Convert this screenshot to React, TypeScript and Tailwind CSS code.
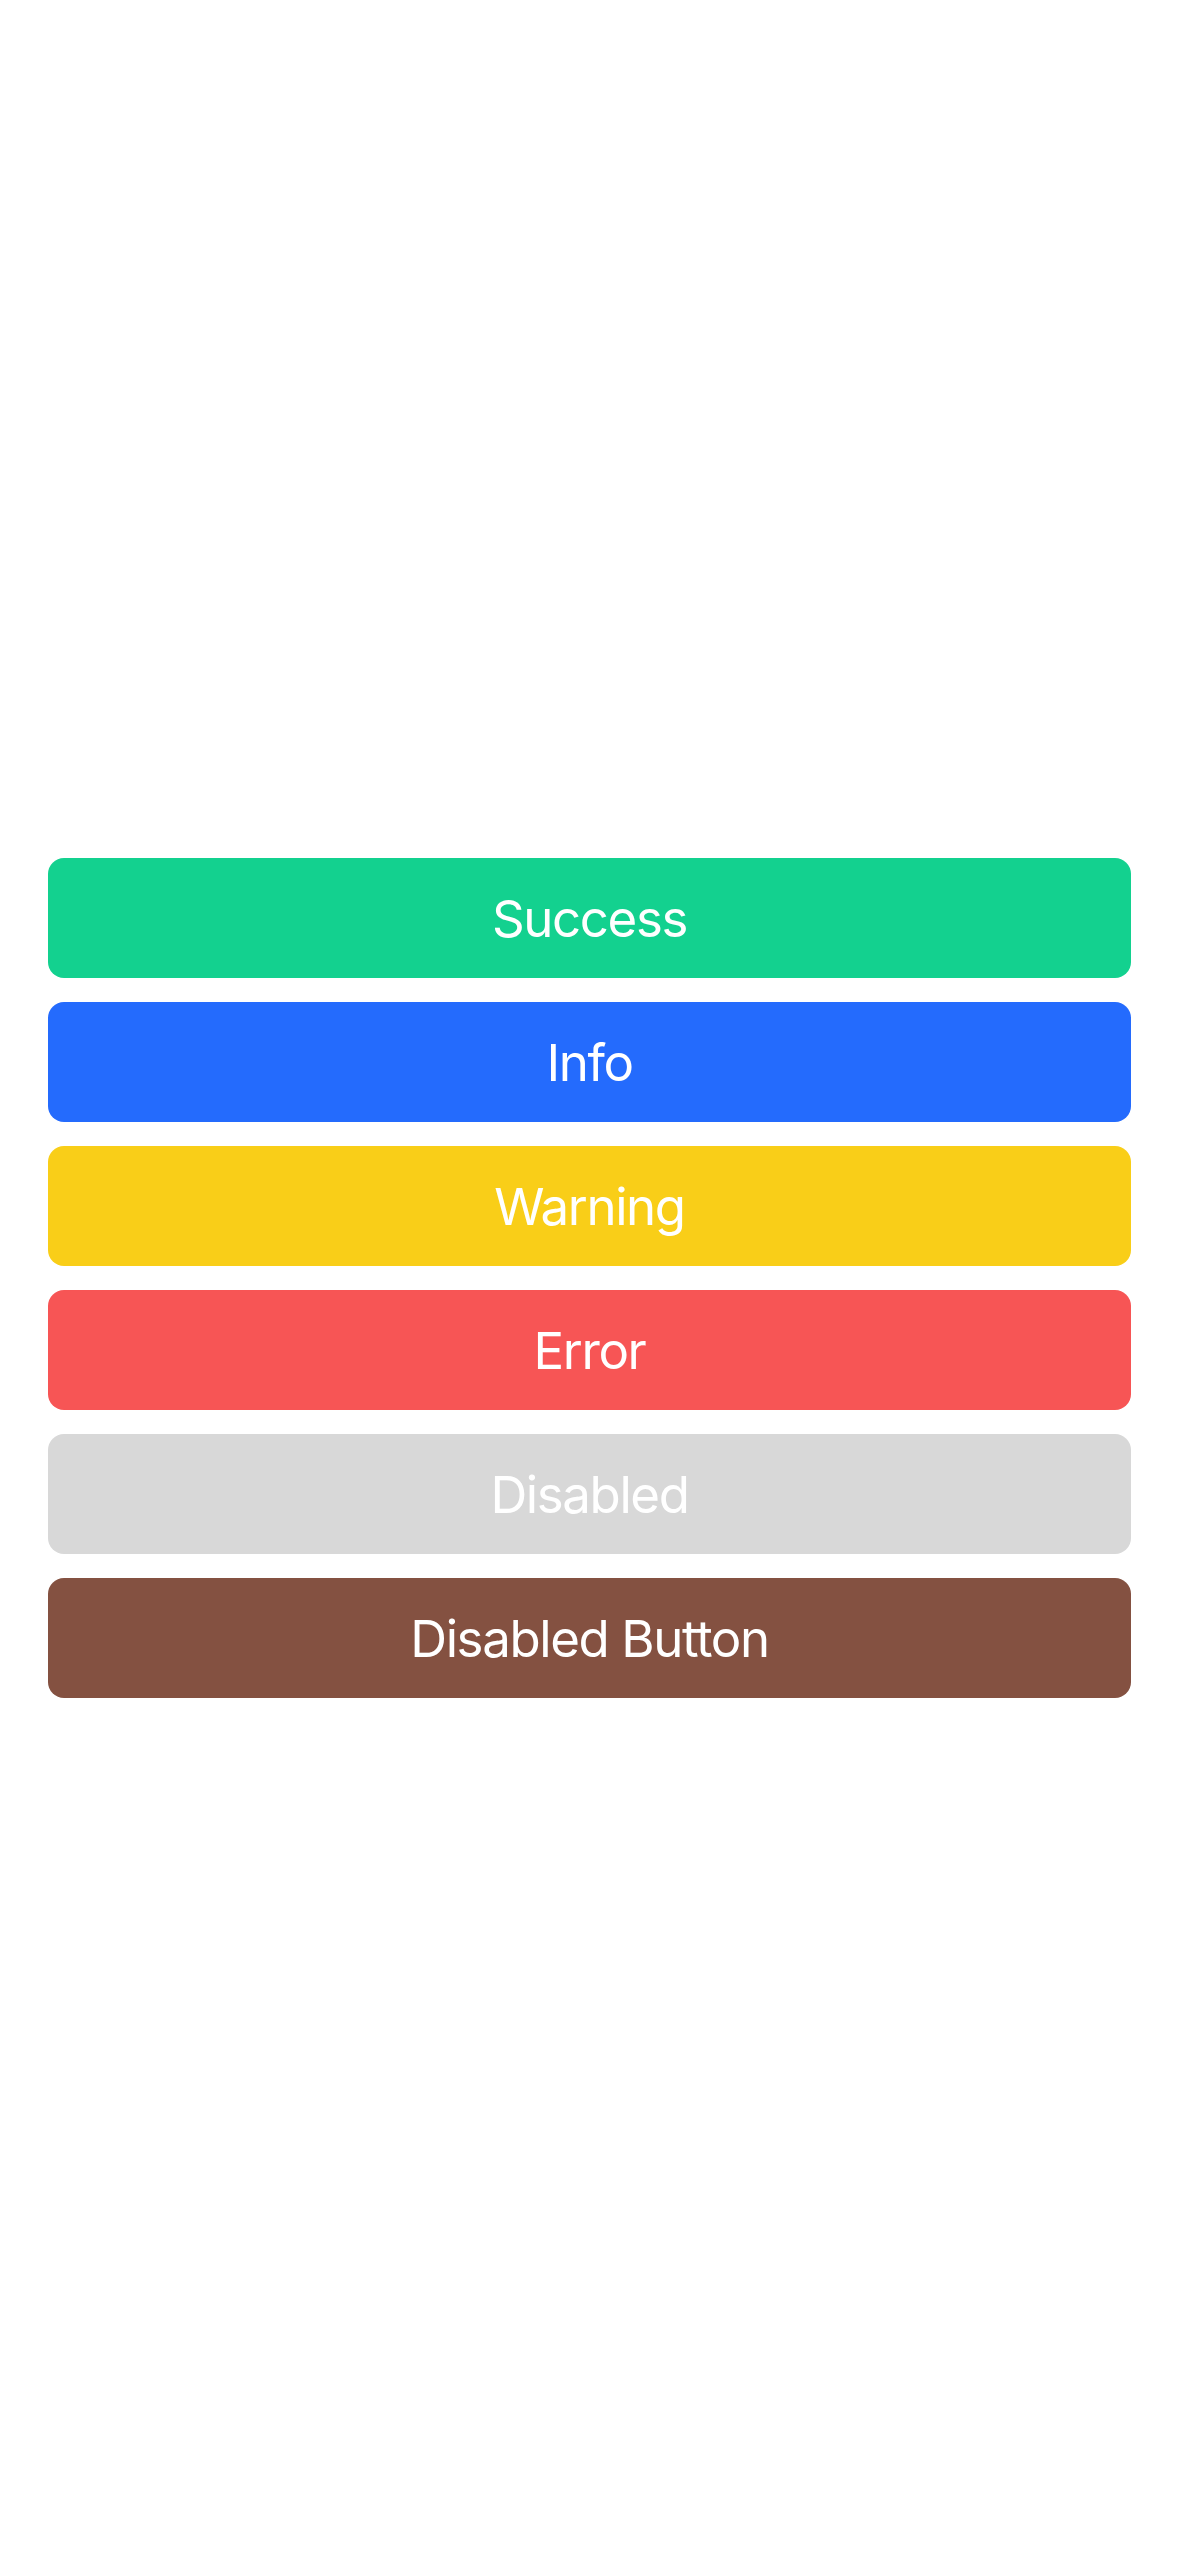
const buttons = [
  { label: "Success", className: "bg-[#13d18f]" },
  { label: "Info", className: "bg-[#246bfd]" },
  { label: "Warning", className: "bg-[#f9ce18]" },
  { label: "Error", className: "bg-[#f75555]" },
  { label: "Disabled", className: "bg-[#d8d8d8]", disabled: true },
  { label: "Disabled Button", className: "bg-[#845141]" },
];

export default function App() {
  return (
    <div
      className="min-h-[2556px] w-full bg-white flex flex-col justify-center px-[48px]"
      style={{ fontFamily: "Inter, 'Noto Sans', sans-serif" }}
    >
      <div className="flex flex-col gap-[24px]">
        {buttons.map((b) => (
          <button
            key={b.label}
            disabled={b.disabled}
            className={`${b.className} h-[120px] w-full rounded-[16px] text-white text-[51px] leading-none tracking-[-1.4px] font-normal flex items-center justify-center`}
          >
            {b.label}
          </button>
        ))}
      </div>
    </div>
  );
}
